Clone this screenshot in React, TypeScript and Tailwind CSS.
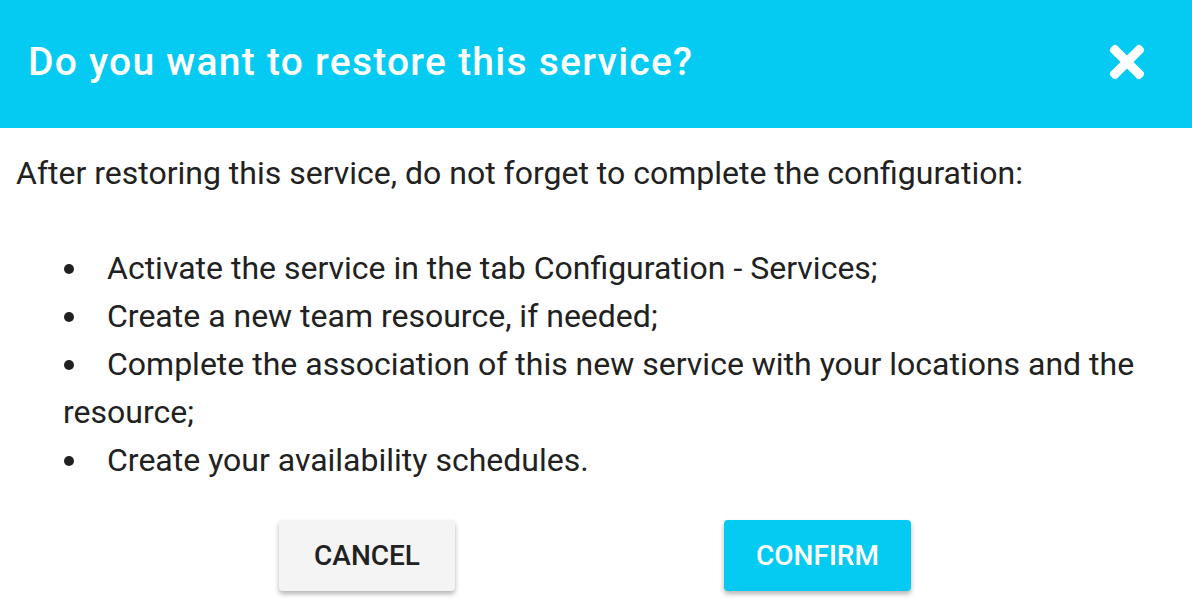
import React from 'react';
import { FaTimes } from 'react-icons/fa';

const steps = [
  'Activate the service in the tab Configuration - Services;',
  'Create a new team resource, if needed;',
  'Complete the association of this new service with your locations and the resource;',
  'Create your availability schedules.',
];

export default function App() {
  return (
    <div className="w-[1192px] h-[606px] bg-white text-[#212121] font-['Roboto',sans-serif] overflow-hidden">
      {/* Header */}
      <div className="h-[128px] bg-[#05cbf2] flex items-center justify-between pl-[28px] pr-[40px]">
        <h2 className="text-[39px] font-medium text-white tracking-[1.25px] pb-[4px]">
          Do you want to restore this service?
        </h2>
        <button className="text-white flex items-center justify-center w-[50px] h-[50px] pb-[4px]">
          <FaTimes size={50} />
        </button>
      </div>

      {/* Body */}
      <div className="px-4 text-[32px] leading-[48px]">
        <p className="pt-[21px] mb-[47px]">
          After restoring this service, do not forget to complete the configuration:
        </p>
        <ul className="pl-[47px]">
          {steps.map((s) => (
            <li key={s}>
              <span className="inline-block w-[10px] h-[10px] rounded-full bg-[#212121] ml-[1px] mr-[33px] align-middle mb-[4px]" />
              {s}
            </li>
          ))}
        </ul>
      </div>

      {/* Actions */}
      <div className="flex mt-[36px] pl-[279px] gap-[269px]">
        <button className="w-[176px] h-[71px] bg-[#f4f4f4] rounded-[4px] shadow-[0_3px_5px_rgba(0,0,0,0.3)] text-[28px] font-medium text-[#212121]">
          CANCEL
        </button>
        <button className="w-[187px] h-[71px] bg-[#05cbf2] rounded-[4px] shadow-[0_3px_5px_rgba(0,0,0,0.3)] text-[28px] font-medium text-white">
          CONFIRM
        </button>
      </div>
    </div>
  );
}
